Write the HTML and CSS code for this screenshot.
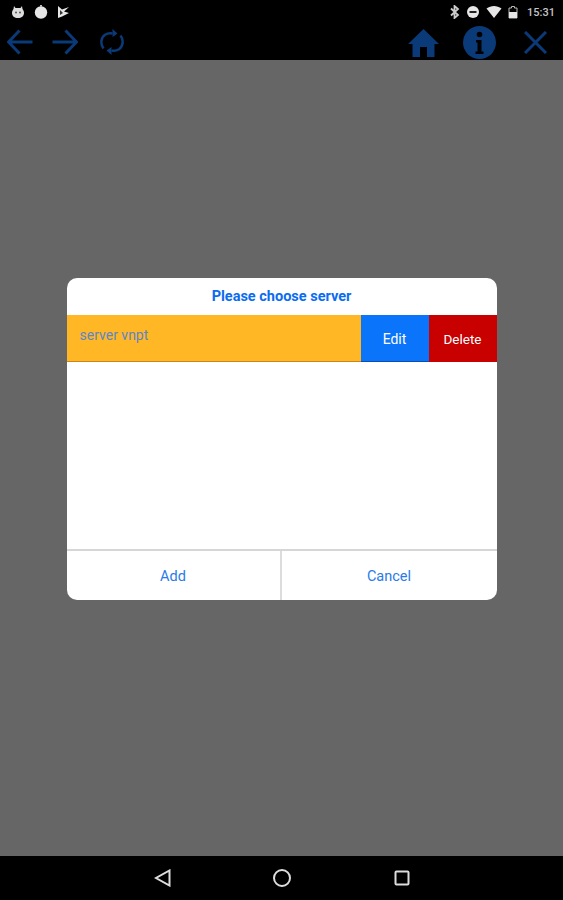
FILE: index.html
```html
<!DOCTYPE html>
<html lang="en">
<head>
    <meta charset="UTF-8">
    <meta name="viewport" content="width=device-width, initial-scale=1.0">
    <title>Please choose server</title>
    <link rel="stylesheet" href="styles.css">
</head>
<body>

    <div class="status-bar">
        <div class="status-left">
            <svg class="status-icon" viewBox="0 0 14 14"><path d="M3 1l1.500 2h5L11 1l.5 3c1 1.200 1.500 2.500 1.500 4 0 3-2.500 5-6 5s-6-2-6-5c0-1.500.5-2.800 1.500-4z" fill="#dddddd"/><circle cx="5" cy="7.500" r="1" fill="#555"/><circle cx="9" cy="7.500" r="1" fill="#555"/></svg>
            <svg class="status-icon" viewBox="0 0 14 14"><circle cx="7" cy="7.500" r="6.200" fill="#e6e6e6"/><rect x="6" y="0" width="2" height="2" fill="#bbb"/></svg>
            <svg class="status-icon" viewBox="0 0 14 14"><path d="M1 1v12l4-1.500L12 8 7 6.500 12 2 5 4.500z" fill="#e6e6e6"/><path d="M3 5v5l3-2z" fill="#333"/></svg>
        </div>
        <div class="status-right">
            <svg class="status-icon small" viewBox="0 0 10 14"><path d="M1 3.500l7 6.500-3.500 3V1L8 4 1 10.500" fill="none" stroke="#cccccc" stroke-width="1.800"/></svg>
            <svg class="status-icon" viewBox="0 0 14 14"><circle cx="7" cy="7" r="6" fill="#e6e6e6"/><rect x="3.500" y="6" width="7" height="2" fill="#222"/></svg>
            <svg class="status-icon wifi" viewBox="0 0 16 14"><path d="M0.500 3.500C5 0 11 0 15.500 3.500L8 13z" fill="#e6e6e6"/></svg>
            <svg class="status-icon small" viewBox="0 0 10 14"><path d="M3.500 1.500h3v1.500h2.500v10H1V3h2.500z" fill="none" stroke="#bbb" stroke-width="1"/><rect x="1" y="7" width="8" height="6" fill="#e6e6e6"/></svg>
            <span class="clock">15:31</span>
        </div>
    </div>

    <div class="toolbar">
        <svg class="tool back" viewBox="0 0 26 26"><path d="M12.500 1.500L1.500 13l11 11.500M1.500 13H25.500" class="tool-line"/></svg>
        <svg class="tool forward" viewBox="0 0 26 26"><path d="M13.500 1.500L24.500 13l-11 11.500M24.500 13H.5" class="tool-line"/></svg>
        <svg class="tool refresh" viewBox="0 0 24 28"><path d="M3.500 20.500C0 16 1 9.500 5 6.800 7.500 5.200 10 5 12.500 5.500M20.500 7.500C24 12 23 18.500 19 21.200 16.500 22.800 14 23 11.500 22.500" class="tool-line thin"/><path d="M12.500 1l5 4.500-5 3.500zM11.500 27l-5-4.500 5-3.500z" class="tool-fill"/></svg>
        <div class="spacer"></div>
        <svg class="tool home" viewBox="0 0 31 28"><path d="M15.500 0L31 15h-4.500v13H19V18h-7v10H4.500V15H0z" class="tool-fill"/></svg>
        <svg class="tool info" viewBox="0 0 33 33"><circle cx="16.500" cy="16.500" r="16.500" class="tool-fill"/><circle cx="16.500" cy="8.500" r="2.800" fill="#000"/><path d="M13 14h5.500v11.500h2v2.500h-8v-2.500h2v-9H13z" fill="#000"/></svg>
        <svg class="tool close" viewBox="0 0 23 23"><path d="M1 1l21 21M22 1L1 22" class="tool-line"/></svg>
    </div>

    <div class="main">
        <div class="dialog">
            <div class="dialog-title">Please choose server</div>
            <div class="server-row">
                <div class="server-name">server vnpt</div>
                <div class="row-button edit">Edit</div>
                <div class="row-button delete">Delete</div>
            </div>
            <div class="server-list"></div>
            <div class="dialog-buttons">
                <div class="dialog-button add">Add</div>
                <div class="dialog-button cancel">Cancel</div>
            </div>
        </div>
    </div>

    <div class="nav-bar">
        <svg class="nav-icon" viewBox="0 0 18 18"><path d="M15.500 1.500v15L2 9z" class="nav-line"/></svg>
        <svg class="nav-icon" viewBox="0 0 18 18"><circle cx="9" cy="9" r="8" class="nav-line"/></svg>
        <svg class="nav-icon" viewBox="0 0 18 18"><rect x="3.500" y="2.500" width="13" height="13" rx="1" class="nav-line"/></svg>
    </div>

</body>
</html>
```

FILE: styles.css
```css
html, body {
    height: 100%;
}

body {
    margin: 0;
    padding: 0;
    width: 563px;
    height: 900px;
    display: flex;
    flex-direction: column;
    overflow: hidden;
    background-color: #666666;
    font-family: 'Roboto', 'Liberation Sans', sans-serif;
}

.status-bar {
    height: 24px;
    background-color: #000;
    display: flex;
    justify-content: space-between;
    align-items: center;
    padding: 0 8px 0 11px;
    flex-shrink: 0;
}

.status-left,
.status-right {
    display: flex;
    align-items: center;
}

.status-left {
    gap: 9px;
}

.status-right {
    gap: 6px;
}

.status-icon {
    width: 14px;
    height: 14px;
    display: block;
}

.status-icon.small {
    width: 10px;
}

.status-icon.wifi {
    width: 16px;
}

.clock {
    color: #c4c4c4;
    font-size: 11px;
    font-weight: 500;
    margin-left: 3px;
}

.toolbar {
    height: 36px;
    background-color: #000;
    display: flex;
    align-items: center;
    padding: 0 16px 0 7px;
    flex-shrink: 0;
}

.spacer {
    flex: 1;
}

.tool {
    display: block;
    flex-shrink: 0;
}

.tool-line {
    fill: none;
    stroke: #0a3a78;
    stroke-width: 3;
}

.tool-line.thin {
    stroke-width: 2.500;
}

.tool-fill {
    fill: #0a3a78;
}

.back, .forward {
    width: 26px;
    height: 26px;
}

.forward {
    margin-left: 19px;
}

.refresh {
    width: 24px;
    height: 28px;
    margin-left: 22px;
}

.home {
    width: 31px;
    height: 28px;
    margin-top: 2px;
}

.info {
    width: 33px;
    height: 33px;
    margin-left: 24px;
}

.close {
    width: 23px;
    height: 23px;
    margin-left: 28px;
}

.main {
    flex: 1;
    background-color: #666666;
    display: flex;
    justify-content: center;
    padding-top: 218px;
}

.dialog {
    width: 430px;
    height: 322px;
    background-color: #fff;
    border-radius: 10px;
    overflow: hidden;
    display: flex;
    flex-direction: column;
}

.dialog-title {
    height: 37px;
    line-height: 38px;
    text-align: center;
    color: #0a6cf0;
    font-size: 14.500px;
    font-weight: 700;
    flex-shrink: 0;
}

.server-row {
    height: 47px;
    display: flex;
    flex-shrink: 0;
}

.server-name {
    flex: 1;
    background-color: #ffb726;
    border-bottom: 1px solid #c9861a;
    color: #5f86c0;
    font-size: 14px;
    padding: 12px 0 0 13px;
}

.row-button {
    width: 68px;
    color: #fff;
    font-size: 14px;
    text-align: center;
    line-height: 49px;
}

.edit {
    background-color: #0a74fa;
    border-bottom: 1px solid #0a4fb0;
    height: 46px;
}

.delete {
    background-color: #c80000;
    font-size: 13.500px;
}

.server-list {
    flex: 1;
}

.dialog-buttons {
    height: 49px;
    display: flex;
    border-top: 2px solid #d6d6d6;
    flex-shrink: 0;
}

.dialog-button {
    color: #2a7ae8;
    font-size: 14.500px;
    text-align: center;
    line-height: 51px;
}

.add {
    width: 213px;
    border-right: 2px solid #dcdcdc;
}

.cancel {
    flex: 1;
}

.nav-bar {
    height: 44px;
    background-color: #000;
    display: flex;
    justify-content: center;
    align-items: center;
    gap: 101px;
    flex-shrink: 0;
}

.nav-icon {
    width: 18px;
    height: 18px;
    display: block;
}

.nav-line {
    fill: none;
    stroke: #dddddd;
    stroke-width: 2;
}
```
